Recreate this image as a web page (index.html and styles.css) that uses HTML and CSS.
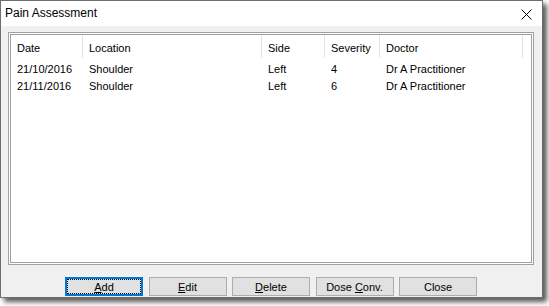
FILE: index.html
```html
<!DOCTYPE html>
<html lang="en">
<head>
  <meta charset="UTF-8">
  <title>Pain Assessment</title>
  <link rel="stylesheet" href="styles.css">
</head>
<body>
  <div class="window">
    <div class="titlebar">
      <span class="title">Pain Assessment</span>
      <svg class="close-x" width="11" height="11" viewBox="0 0 11 11">
        <path d="M0.5 0.5 L10.5 10.5 M10.5 0.5 L0.5 10.5" stroke="#000" stroke-width="1" fill="none"/>
      </svg>
    </div>
    <div class="client">
      <div class="listview">
        <div class="lv-inner">
          <div class="lv-row lv-header">
            <div class="cell">Date</div>
            <div class="cell">Location</div>
            <div class="cell">Side</div>
            <div class="cell">Severity</div>
            <div class="cell">Doctor</div>
          </div>
          <div class="lv-body">
            <div class="lv-row">
              <div class="cell">21/10/2016</div>
              <div class="cell">Shoulder</div>
              <div class="cell">Left</div>
              <div class="cell">4</div>
              <div class="cell">Dr A Practitioner</div>
            </div>
            <div class="lv-row">
              <div class="cell">21/11/2016</div>
              <div class="cell">Shoulder</div>
              <div class="cell">Left</div>
              <div class="cell">6</div>
              <div class="cell">Dr A Practitioner</div>
            </div>
          </div>
        </div>
      </div>
      <div class="buttons">
        <button class="btn default"><span class="focus"><u>A</u>dd</span></button>
        <button class="btn"><u>E</u>dit</button>
        <button class="btn"><u>D</u>elete</button>
        <button class="btn">Dose <u>C</u>onv.</button>
        <button class="btn">Close</button>
      </div>
    </div>
  </div>
</body>
</html>
```

FILE: styles.css
```css
body {
  margin: 0;
  padding-bottom: 8px;
  background: #fff;
  font-family: "Liberation Sans", Arial, sans-serif;
  font-size: 11px;
  color: #000;
}

.window {
  width: 541px;
  height: 296px;
  border: 1px solid #6e6e6e;
  background: #f0f0f0;
  box-shadow: 4px 4px 5px rgba(0, 0, 0, 0.65);
  display: flex;
  flex-direction: column;
}

.titlebar {
  height: 25px;
  flex: none;
  background: #fff;
  display: flex;
  align-items: center;
  justify-content: space-between;
  padding: 0 10px 0 4px;
}

.title {
  font-size: 12px;
  margin-top: -1px;
}

.close-x {
  margin-top: 2px;
}

.client {
  flex: 1;
  padding: 6px 8px 0 7px;
  display: flex;
  flex-direction: column;
}

.listview {
  height: 229px;
  flex: none;
  border: 1px solid #a0a0a0;
  background: #fff;
  padding: 1px;
}

.lv-inner {
  height: 100%;
  box-sizing: border-box;
  border: 1px solid #a0a0a0;
}

.lv-row {
  display: grid;
  grid-template-columns: 72px 179px 63px 55px 143px;
  height: 17px;
  align-items: center;
}

.lv-header {
  height: 23px;
  align-items: stretch;
}

.lv-header .cell {
  border-right: 1px solid #e5e5e5;
  display: flex;
  align-items: center;
  padding-top: 3px;
}

.lv-body {
  padding-top: 2px;
}

.cell {
  padding-left: 6px;
  white-space: nowrap;
}

.buttons {
  display: flex;
  justify-content: center;
  gap: 5.5px;
  margin-top: 12px;
}

.btn {
  width: 78px;
  height: 19px;
  box-sizing: border-box;
  border: 1px solid #adadad;
  background: #e1e1e1;
  font-family: "Liberation Sans", Arial, sans-serif;
  font-size: 11px;
  color: #000;
  padding: 0;
  margin: 0;
}

.btn u {
  text-decoration-thickness: 1px;
  text-underline-offset: 1px;
}

.btn.default {
  border: 2px solid #0078d7;
  padding: 0;
  display: flex;
}

.focus {
  flex: 1;
  border: 1px dotted #000;
  display: flex;
  align-items: center;
  justify-content: center;
}
```
